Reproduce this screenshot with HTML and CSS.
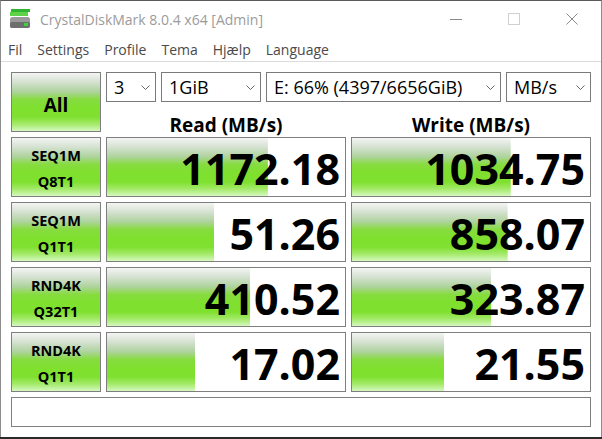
FILE: index.html
```html
<!DOCTYPE html>
<html>
<head>
<meta charset="utf-8">
<link rel="stylesheet" href="styles.css">
</head>
<body>
<div class="window">
  <div class="titlebar">
    <svg class="appicon" width="20" height="20" viewBox="0 0 20 20">
      <rect x="1" y="0" width="19" height="3" fill="#2fb52f"/>
      <rect x="0" y="3" width="18" height="4" fill="#5fd24a"/>
      <rect x="0" y="8" width="20" height="11" rx="2.5" fill="#9a9a9a"/>
      <rect x="0" y="13" width="20" height="6" rx="2" fill="#6e6e6e"/>
      <rect x="14" y="14" width="4" height="3" fill="#3fd23f"/>
    </svg>
    <span class="title">CrystalDiskMark 8.0.4 x64 [Admin]</span>
    <div class="controls">
      <span class="ctl"><svg width="12" height="12" viewBox="0 0 12 12"><line x1="0" y1="6.5" x2="12" y2="6.5" stroke="#8a8a8a" stroke-width="1"/></svg></span>
      <span class="ctl"><svg width="12" height="12" viewBox="0 0 12 12"><rect x="0.5" y="0.5" width="11" height="11" fill="none" stroke="#d0d0d0" stroke-width="1"/></svg></span>
      <span class="ctl"><svg width="12" height="12" viewBox="0 0 12 12"><path d="M0.5 0.5 L11.5 11.5 M11.5 0.5 L0.5 11.5" stroke="#8a8a8a" stroke-width="1"/></svg></span>
    </div>
  </div>
  <div class="menubar">
    <span>Fil</span><span>Settings</span><span>Profile</span><span>Tema</span><span>Hjælp</span><span>Language</span>
  </div>
  <div class="content">
    <div class="top">
      <div class="allbtn green">All</div>
      <div class="topright">
        <div class="combos">
          <div class="combo c1"><span>3</span><svg class="chev" width="9" height="5" viewBox="0 0 9 5"><path d="M0.5 0.5 L4.5 4.5 L8.5 0.5" fill="none" stroke="#666" stroke-width="1"/></svg></div>
          <div class="combo c2"><span>1GiB</span><svg class="chev" width="9" height="5" viewBox="0 0 9 5"><path d="M0.5 0.5 L4.5 4.5 L8.5 0.5" fill="none" stroke="#666" stroke-width="1"/></svg></div>
          <div class="combo c3"><span>E: 66% (4397/6656GiB)</span><svg class="chev" width="9" height="5" viewBox="0 0 9 5"><path d="M0.5 0.5 L4.5 4.5 L8.5 0.5" fill="none" stroke="#666" stroke-width="1"/></svg></div>
          <div class="combo c4"><span>MB/s</span><svg class="chev" width="9" height="5" viewBox="0 0 9 5"><path d="M0.5 0.5 L4.5 4.5 L8.5 0.5" fill="none" stroke="#666" stroke-width="1"/></svg></div>
        </div>
        <div class="headers">
          <div class="hdr">Read (MB/s)</div>
          <div class="hdr">Write (MB/s)</div>
        </div>
      </div>
    </div>
    <div class="row">
      <div class="label green">SEQ1M<br>Q8T1</div>
      <div class="val" style="--p:67.6%">1172.18</div>
      <div class="val" style="--p:66.7%">1034.75</div>
    </div>
    <div class="row">
      <div class="label green">SEQ1M<br>Q1T1</div>
      <div class="val" style="--p:45%">51.26</div>
      <div class="val" style="--p:65.4%">858.07</div>
    </div>
    <div class="row">
      <div class="label green">RND4K<br>Q32T1</div>
      <div class="val" style="--p:60.1%">410.52</div>
      <div class="val" style="--p:58.4%">323.87</div>
    </div>
    <div class="row">
      <div class="label green">RND4K<br>Q1T1</div>
      <div class="val" style="--p:37%">17.02</div>
      <div class="val" style="--p:38.7%">21.55</div>
    </div>
    <div class="status"></div>
  </div>
</div>
</body>
</html>
```
FILE: styles.css
```css
* { box-sizing: border-box; }
html, body { margin: 0; padding: 0; }
body {
  background: #2a2a2a;
  width: 602px;
  height: 439px;
  overflow: hidden;
  font-family: "Open Sans", "Noto Sans", sans-serif;
}
.window {
  width: 602px;
  height: 437px;
  background: #fff;
  border-left: 1px solid #8c8c8c;
  border-right: 1px solid #8c8c8c;
  border-top: 1px solid #5a5a5a;
  display: flex;
  flex-direction: column;
}
.titlebar {
  height: 37px;
  display: flex;
  align-items: center;
  padding-left: 9px;
}
.appicon { margin-top: 0; }
.title {
  margin-left: 10px;
  font-size: 14px;
  color: #9b9b9b;
  margin-top: 0;
}
.controls {
  margin-left: auto;
  display: flex;
  height: 100%;
}
.ctl {
  width: 58px;
  display: flex;
  align-items: center;
  justify-content: center;
  margin-top: -1px;
}
.menubar {
  height: 25px;
  display: flex;
  align-items: center;
  padding-left: 7px;
  padding-top: 1px;
  gap: 15px;
  font-size: 14px;
  color: #4a4a4a;
  border-bottom: 1px solid #dcdcdc;
}
.content {
  padding: 10px;
  display: flex;
  flex-direction: column;
  gap: 5px;
}
.top {
  display: flex;
  gap: 5px;
  height: 60px;
}
.green {
  border: 1px solid #7f7f7f;
  background: linear-gradient(#f4f5f4 0%, #d8e3d5 14%, #afd39e 32%, #86dc3e 46%, #7fe02e 60%, #80e030 76%, #a4ea6a 88%, #d6f8c0 100%);
  font-weight: bold;
  color: #000;
  display: flex;
  align-items: center;
  justify-content: center;
  text-align: center;
}
.allbtn {
  width: 90px;
  height: 60px;
  font-size: 19px;
  padding-top: 5px;
}
.topright {
  width: 485px;
  display: flex;
  flex-direction: column;
}
.combos {
  display: flex;
  gap: 5px;
  height: 30px;
}
.combo {
  border: 1px solid #7a7a7a;
  background: #fff;
  display: flex;
  align-items: center;
  padding-left: 7px;
  padding-right: 5px;
  font-size: 18px;
  color: #000;
}
.combo span { flex: 1; white-space: nowrap; }
.c1 { width: 50px; }
.c2 { width: 100px; }
.c3 { width: 235px; }
.c4 { width: 85px; }
.chev { flex: none; margin-top: 1px; }
.headers {
  display: flex;
  gap: 5px;
  height: 30px;
}
.hdr {
  width: 240px;
  text-align: center;
  font-weight: bold;
  font-size: 19px;
  line-height: 24px;
  padding-top: 11px;
}
.row {
  display: flex;
  gap: 5px;
  height: 60px;
}
.label {
  width: 90px;
  font-size: 14.5px;
  line-height: 26px;
  padding-top: 3px;
}
.val {
  width: 240px;
  border: 1px solid #7f7f7f;
  background: linear-gradient(#f4f5f4 0%, #d8e3d5 14%, #afd39e 32%, #86dc3e 46%, #7fe02e 60%, #80e030 76%, #a4ea6a 88%, #d6f8c0 100%) no-repeat left top / var(--p) 100%, #fff;
  font-weight: bold;
  font-size: 43px;
  text-align: right;
  padding-right: 5px;
  line-height: 56px;
  padding-top: 3px;
  color: #000;
}
.status {
  height: 30px;
  width: 580px;
  border: 1px solid #7f7f7f;
}
```
